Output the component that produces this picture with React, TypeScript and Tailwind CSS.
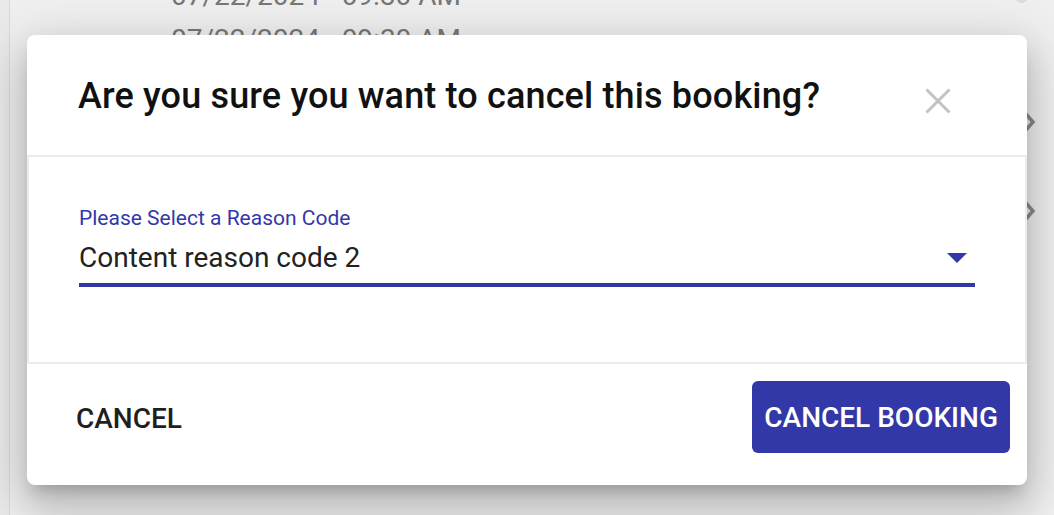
import React from 'react'

const font = { fontFamily: 'Roboto, "Noto Sans", "Liberation Sans", sans-serif' }

function Chevron() {
    return (
        <svg width="14" height="22" viewBox="0 0 14 22" fill="none">
            <path d="M3 2l8 9-8 9" stroke="#8a8a8a" strokeWidth="3.5" />
        </svg>
    )
}

export default function App() {
    return (
        <div className="relative h-[515px] w-[1054px] overflow-hidden bg-[#e8e8e8]" style={font}>
            {/* page behind the dialog */}
            <div className="flex h-full">
                <div className="w-[10px] border-r border-[#d9d9d9] bg-[#e9e9e9]" />
                <div className="flex flex-1 flex-col bg-[#efefef]">
                    <div className="-mt-[26px] pl-[161px] text-[28px] leading-[44px] text-[#777]">
                        <p>07/22/2024 - 09:30 AM</p>
                        <p>07/22/2024 - 09:30 AM</p>
                    </div>
                    <div className="flex flex-col items-end gap-[67px] pr-[18px] pt-[49px]">
                        <Chevron />
                        <Chevron />
                    </div>
                </div>
            </div>
            <div className="absolute -top-[10px] right-[26px] h-[13px] w-[13px] rounded-full bg-[#dcdcdc]" />

            {/* dialog */}
            <div className="absolute left-[27px] top-[35px] flex h-[450px] w-[1000px] flex-col rounded-[8px] bg-white shadow-[0_11px_15px_-7px_rgba(0,0,0,0.2),0_24px_38px_3px_rgba(0,0,0,0.14),0_9px_46px_8px_rgba(0,0,0,0.12)]">
                <div className="flex h-[120px] items-center justify-between pl-[51px] pr-[76px] pt-[2px]">
                    <h2 className="text-[36px] font-medium leading-[36px] tracking-[0.15px] text-[#111]">
                        Are you sure you want to cancel this booking?
                    </h2>
                    <svg width="26" height="26" viewBox="0 0 26 26" className="mt-[10px]">
                        <path d="M1.5 1.5l23 23M24.5 1.5l-23 23" stroke="#c2c2c2" strokeWidth="3" />
                    </svg>
                </div>

                <div className="h-[209px] border-2 border-[#ececec] pl-[50px] pr-[50px] pt-[51px]">
                    <label className="block text-[21px] leading-[21px] text-[#3338a8]">
                        Please Select a Reason Code
                    </label>
                    <div className="mt-[15px] flex items-center justify-between border-b-4 border-[#3338a8] pb-[11px]">
                        <span className="text-[28px] leading-[28px] text-[#222]">Content reason code 2</span>
                        <svg width="20" height="10" viewBox="0 0 20 10" className="mr-[8px]">
                            <path d="M0 0h20l-10 10z" fill="#3338a8" />
                        </svg>
                    </div>
                </div>

                <div className="flex flex-1 items-start justify-between pl-[49px] pr-[17px] pt-[17px]">
                    <button className="mt-[20px] text-[28px] font-medium uppercase leading-[36px] text-[#1f1f1f]">
                        Cancel
                    </button>
                    <button className="h-[72px] rounded-[6px] bg-[#3338a8] px-[12px] pt-[2px] text-[28px] font-medium uppercase leading-[36px] text-white">
                        Cancel Booking
                    </button>
                </div>
            </div>
        </div>
    )
}
